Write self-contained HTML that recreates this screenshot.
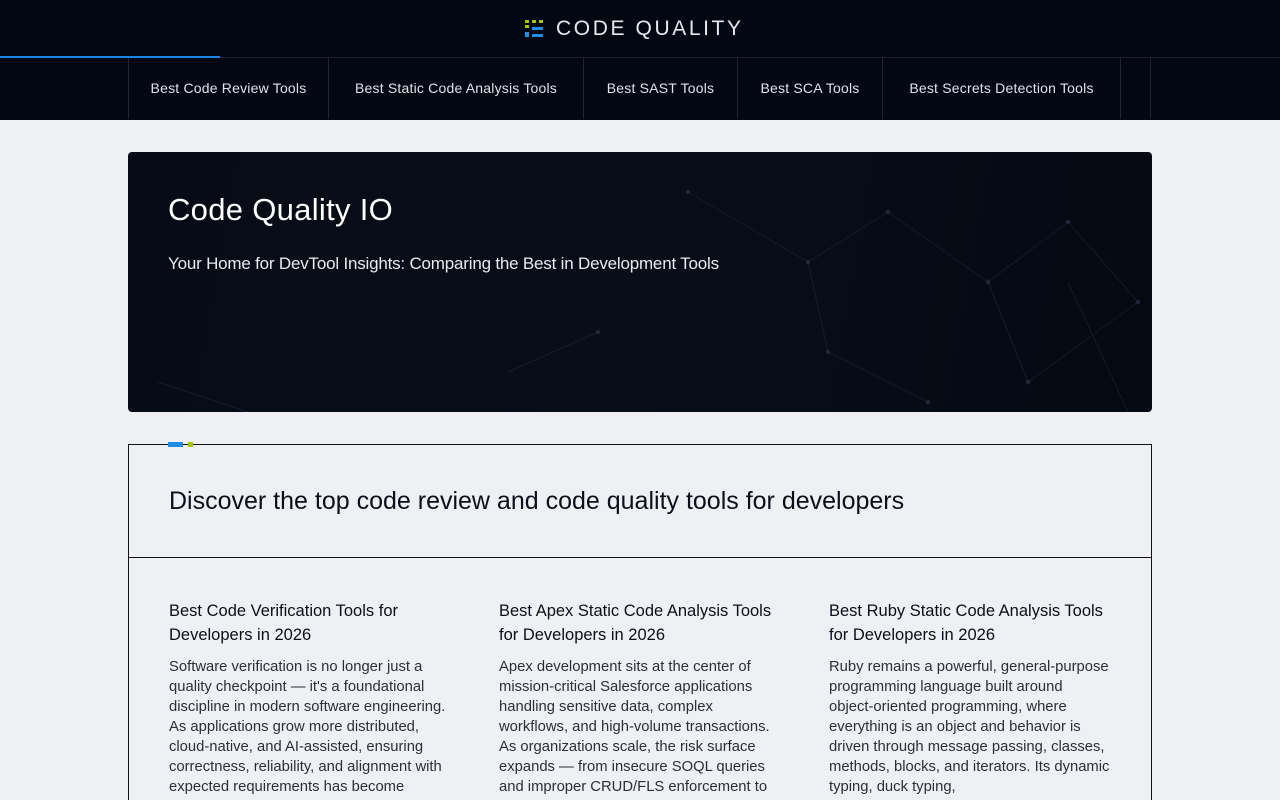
<!DOCTYPE html>
<html><head><meta charset="utf-8"><style>
*{margin:0;padding:0;box-sizing:border-box}
html,body{width:1280px;height:800px;overflow:hidden}
body{background:#eef0f4;font-family:"Liberation Sans",sans-serif;color:#0a0f1a;position:relative}
.top{height:58px;background:#030711;position:relative;border-bottom:1px solid #1b2130}
.top .line{position:absolute;left:0;top:56px;width:220px;height:2px;background:#1a84e6}
.logo{position:absolute;left:525px;top:18px;display:flex;align-items:center}
.logo span{color:#e6e8ee;font-size:21px;letter-spacing:2.6px;margin-left:13px;line-height:22px}
nav{height:62px;background:#030711;position:relative}
nav .it{position:absolute;top:0;height:61px;border-left:1px solid #1f2533;color:#dfe2ea;font-size:14px;line-height:61px;text-align:center;letter-spacing:.2px}
.hero{position:absolute;left:128px;top:152px;width:1024px;height:260px;border-radius:4px;background:linear-gradient(100deg,#070b15 0%,#080d18 50%,#070b15 75%,#050912 100%);overflow:hidden}
.hero h1{position:absolute;left:40px;top:40px;color:#fff;font-weight:normal;font-size:31px;letter-spacing:.3px}
.hero p{position:absolute;left:40px;top:102px;color:#e8eaf0;font-size:17px;letter-spacing:-.2px}
.box{position:absolute;left:128px;top:444px;width:1024px;height:380px;border:1px solid #111}
.box h2{position:absolute;left:40px;top:42px;font-weight:normal;font-size:25px;color:#0a0f1a}
.box .div{position:absolute;left:0;right:0;top:112px;border-top:1px solid #111}
.col{position:absolute;top:154px;width:282px}
.col h3{font-weight:normal;font-size:16.5px;line-height:24px;color:#0a0f1a}
.col p{margin-top:10px;font-size:14.8px;line-height:20px;color:#2a2f38}
</style></head><body>
<div class="top"><div class="line"></div>
<div class="logo"><svg width="18" height="18"><g fill="#a9c400"><rect x="0" y="0" width="4" height="3"/><rect x="7" y="0" width="4" height="3"/><rect x="14" y="0" width="4" height="3"/><rect x="0" y="5" width="4" height="3"/></g><g fill="#1f8fe6"><rect x="7" y="7" width="11" height="3"/><rect x="0" y="12" width="4" height="3"/><rect x="7" y="14" width="11" height="3"/></g><rect x="0" y="14" width="4" height="3" fill="#1f8fe6"/></svg><span>CODE QUALITY</span></div>
</div>
<nav>
<div class="it" style="left:128px;width:200px">Best Code Review Tools</div>
<div class="it" style="left:328px;width:255px">Best Static Code Analysis Tools</div>
<div class="it" style="left:583px;width:154px">Best SAST Tools</div>
<div class="it" style="left:737px;width:145px">Best SCA Tools</div>
<div class="it" style="left:882px;width:238px">Best Secrets Detection Tools</div>
<div class="it" style="left:1120px;width:31px;border-right:1px solid #1f2533"></div>
</nav>
<div class="hero">
<svg width="1024" height="260" style="position:absolute;left:0;top:0" stroke="#1e2636" stroke-width="0.7" fill="#2a3446" opacity="0.8">
<line x1="560" y1="40" x2="680" y2="110"/><line x1="680" y1="110" x2="760" y2="60"/><line x1="680" y1="110" x2="700" y2="200"/><line x1="760" y1="60" x2="860" y2="130"/><line x1="860" y1="130" x2="940" y2="70"/><line x1="860" y1="130" x2="900" y2="230"/><line x1="940" y1="70" x2="1010" y2="150"/><line x1="700" y1="200" x2="800" y2="250"/><line x1="900" y1="230" x2="1010" y2="150"/><line x1="940" y1="130" x2="1000" y2="260"/><line x1="30" y1="230" x2="120" y2="260"/><line x1="380" y1="220" x2="470" y2="180"/>
<circle cx="560" cy="40" r="2"/><circle cx="680" cy="110" r="2"/><circle cx="760" cy="60" r="2"/><circle cx="860" cy="130" r="2"/><circle cx="940" cy="70" r="2"/><circle cx="1010" cy="150" r="2"/><circle cx="700" cy="200" r="2"/><circle cx="900" cy="230" r="2"/><circle cx="800" cy="250" r="2"/><circle cx="470" cy="180" r="2"/>
</svg>
<h1>Code Quality IO</h1>
<p>Your Home for DevTool Insights: Comparing the Best in Development Tools</p>
</div>
<div class="box">
<div style="position:absolute;left:39px;top:-3px;width:15px;height:5px;background:#1f8fe6"></div>
<div style="position:absolute;left:59px;top:-3px;width:5px;height:5px;background:#a9c400"></div>
<h2>Discover the top code review and code quality tools for developers</h2>
<div class="div"></div>
<div class="col" style="left:40px"><h3>Best Code Verification Tools for Developers in 2026</h3><p>Software verification is no longer just a quality checkpoint — it's a foundational discipline in modern software engineering. As applications grow more distributed, cloud-native, and AI-assisted, ensuring correctness, reliability, and alignment with expected requirements has become</p></div>
<div class="col" style="left:370px"><h3>Best Apex Static Code Analysis Tools for Developers in 2026</h3><p>Apex development sits at the center of mission-critical Salesforce applications handling sensitive data, complex workflows, and high-volume transactions. As organizations scale, the risk surface expands — from insecure SOQL queries and improper CRUD/FLS enforcement to</p></div>
<div class="col" style="left:700px"><h3>Best Ruby Static Code Analysis Tools for Developers in 2026</h3><p>Ruby remains a powerful, general-purpose programming language built around object-oriented programming, where everything is an object and behavior is driven through message passing, classes, methods, blocks, and iterators. Its dynamic typing, duck typing,</p></div>
</div>
</body></html>
